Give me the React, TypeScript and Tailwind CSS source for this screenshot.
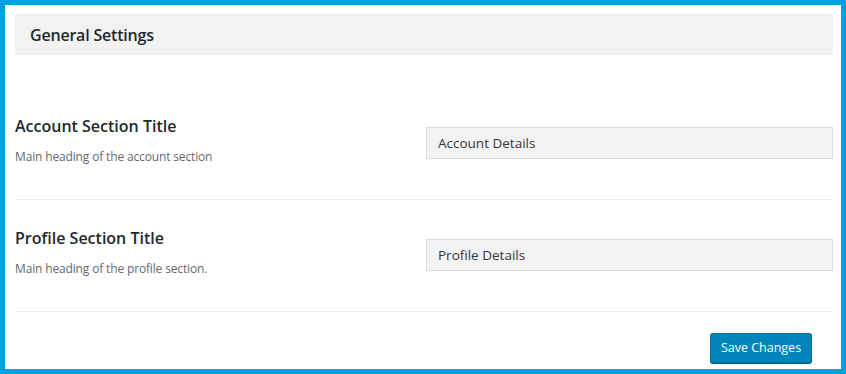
export default function App() {
    return (
        <div
            className="w-[846px] h-[374px] border-[5px] border-[#049ee0] bg-white pl-[10px] pr-[8px] pt-[9px]"
            style={{ fontFamily: '"Open Sans", "Noto Sans", sans-serif' }}
        >
            <div className="h-[41px] bg-[#f3f2f1] flex items-center px-[15px]">
                <h2 className="text-[16px] font-semibold text-[#23282d] tracking-[-0.2px]">General Settings</h2>
            </div>

            <div className="mt-[33px]">
                <SettingRow
                    title="Account Section Title"
                    description="Main heading of the account section"
                    value="Account Details"
                />
                <SettingRow
                    title="Profile Section Title"
                    description="Main heading of the profile section."
                    value="Profile Details"
                />
            </div>

            <div className="flex justify-end pr-[21px] pt-[21px]">
                <button
                    type="button"
                    className="h-[30px] w-[102px] rounded-[3px] bg-[#0085ba] border border-[#0073aa] border-b-[#006799] text-white text-[12.5px] shadow-[0_1px_0_#006799]"
                >
                    Save Changes
                </button>
            </div>
        </div>
    );
}

interface SettingRowProps {
    title: string;
    description: string;
    value: string;
}

function SettingRow({ title, description, value }: SettingRowProps) {
    return (
        <div className="flex justify-between items-start h-[112px] border-b border-[#eeeeee]">
            <div className="pt-[26px]">
                <h3 className="text-[16px] leading-[24px] font-semibold text-[#23282d]">{title}</h3>
                <p className="mt-[10px] text-[12px] leading-[18px] text-[#646970] tracking-[-0.15px]">{description}</p>
            </div>
            <div className="pt-[39px]">
                <input
                    type="text"
                    defaultValue={value}
                    className="w-[407px] h-[32px] bg-[#f3f3f3] border border-[#dddddd] px-[11px] text-[13.5px] text-[#32373c] outline-none"
                />
            </div>
        </div>
    );
}
